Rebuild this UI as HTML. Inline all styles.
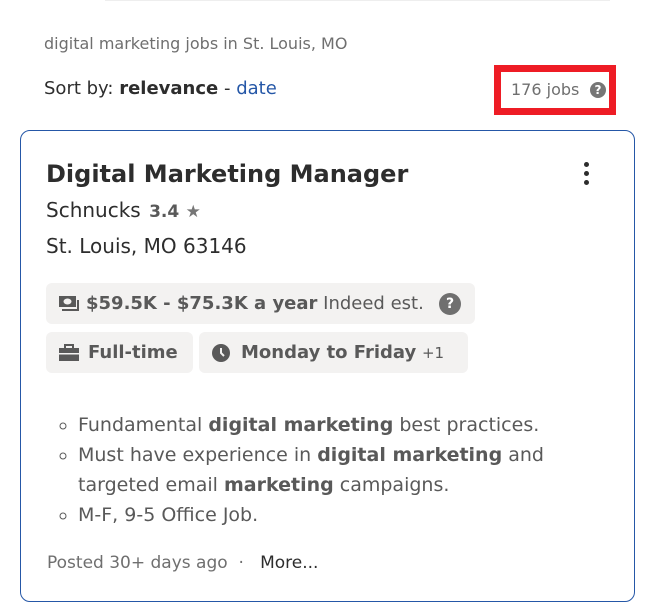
<!DOCTYPE html>
<html><head><style>
body{margin:0;width:657px;height:611px;background:#fff;font-family:"DejaVu Sans",sans-serif;position:relative;overflow:hidden;color:#2d2d2d}
.a{position:absolute;white-space:nowrap}
.chip{position:absolute;background:#f3f2f1;border-radius:6px;height:41px;font-size:18px;color:#595959;display:flex;align-items:center;padding-left:12px;box-sizing:border-box}
.chip b{color:#595959}
ul{position:absolute;left:42px;top:410px;margin:0;padding-left:36px;font-size:19px;line-height:30px;color:#595959;list-style:circle;width:500px}
ul b{color:#595959}
</style></head><body>
<div class="a" style="left:105px;top:0;width:505px;height:1px;background:#eee"></div>
<div class="a" style="left:44px;top:34px;font-size:16px;color:#6f6f6f">digital marketing jobs in St. Louis, MO</div>
<div class="a" style="left:44px;top:78px;font-size:18px;color:#2d2d2d">Sort by: <b>relevance</b> - <span style="color:#2557a7">date</span></div>
<div class="a" style="left:494px;top:65px;width:122px;height:50px;border:7px solid #ee1c25;box-sizing:border-box"></div>
<div class="a" style="left:511px;top:80px;font-size:16px;color:#6f6f6f">176 jobs</div>
<div class="a" style="left:590px;top:82px;width:16px;height:16px;border-radius:50%;background:#767676;color:#fff;font-size:12px;font-weight:bold;text-align:center;line-height:16px">?</div>
<div class="a" style="left:20px;top:130px;width:615px;height:472px;border:1px solid #2557a7;border-radius:10px;box-sizing:border-box"></div>
<div class="a" style="left:46px;top:160px;font-size:24px;font-weight:bold;color:#2d2d2d">Digital Marketing Manager</div>
<div class="a" style="left:584px;top:162px;width:6px">
<div style="width:5px;height:5px;border-radius:50%;background:#2d2d2d;margin-bottom:4px"></div>
<div style="width:5px;height:5px;border-radius:50%;background:#2d2d2d;margin-bottom:4px"></div>
<div style="width:5px;height:5px;border-radius:50%;background:#2d2d2d"></div></div>
<div class="a" style="left:46px;top:198px;font-size:20px">Schnucks <span style="font-size:17px;font-weight:bold;color:#595959;margin-left:2px">3.4</span> <span style="color:#767676;font-size:17px">★</span></div>
<div class="a" style="left:46px;top:234px;font-size:20px">St. Louis, MO 63146</div>
<div class="chip" style="left:46px;top:283px;width:429px">
<svg width="22" height="18" viewBox="0 0 22 18" style="margin-right:6px"><rect x="1" y="1" width="17" height="11" fill="#595959"/><ellipse cx="9.5" cy="6.5" rx="4" ry="3" fill="#f3f2f1"/><path d="M20 5v10H4" stroke="#595959" stroke-width="2" fill="none"/></svg>
<b>$59.5K - $75.3K a year</b>&nbsp;Indeed est.
<span style="margin-left:auto;margin-right:14px;width:22px;height:22px;border-radius:50%;background:#6f6f6f;color:#fff;font-size:14px;font-weight:bold;text-align:center;line-height:22px">?</span></div>
<div class="chip" style="left:46px;top:332px;width:147px">
<svg width="22" height="18" viewBox="0 0 22 18" style="margin-right:8px"><rect x="7" y="1" width="8" height="4" fill="none" stroke="#595959" stroke-width="2"/><rect x="1" y="4" width="20" height="13" fill="#595959"/><rect x="1" y="9" width="20" height="1.5" fill="#f3f2f1"/></svg><b>Full-time</b></div>
<div class="chip" style="left:199px;top:332px;width:269px">
<svg width="20" height="20" viewBox="0 0 20 20" style="margin-right:10px"><circle cx="10" cy="10" r="9" fill="#595959"/><path d="M10 5v5l3 3" stroke="#f3f2f1" stroke-width="2" fill="none"/></svg><b>Monday to Friday</b>&nbsp;<span style="font-size:15px">+1</span></div>
<ul>
<li>Fundamental <b>digital marketing</b> best practices.</li>
<li>Must have experience in <b>digital marketing</b> and targeted email <b>marketing</b> campaigns.</li>
<li>M-F, 9-5 Office Job.</li>
</ul>
<div class="a" style="left:47px;top:553px;font-size:17px;color:#6f6f6f">Posted 30+ days ago &nbsp;·&nbsp;&nbsp; <span style="color:#2d2d2d">More...</span></div>
</body></html>
